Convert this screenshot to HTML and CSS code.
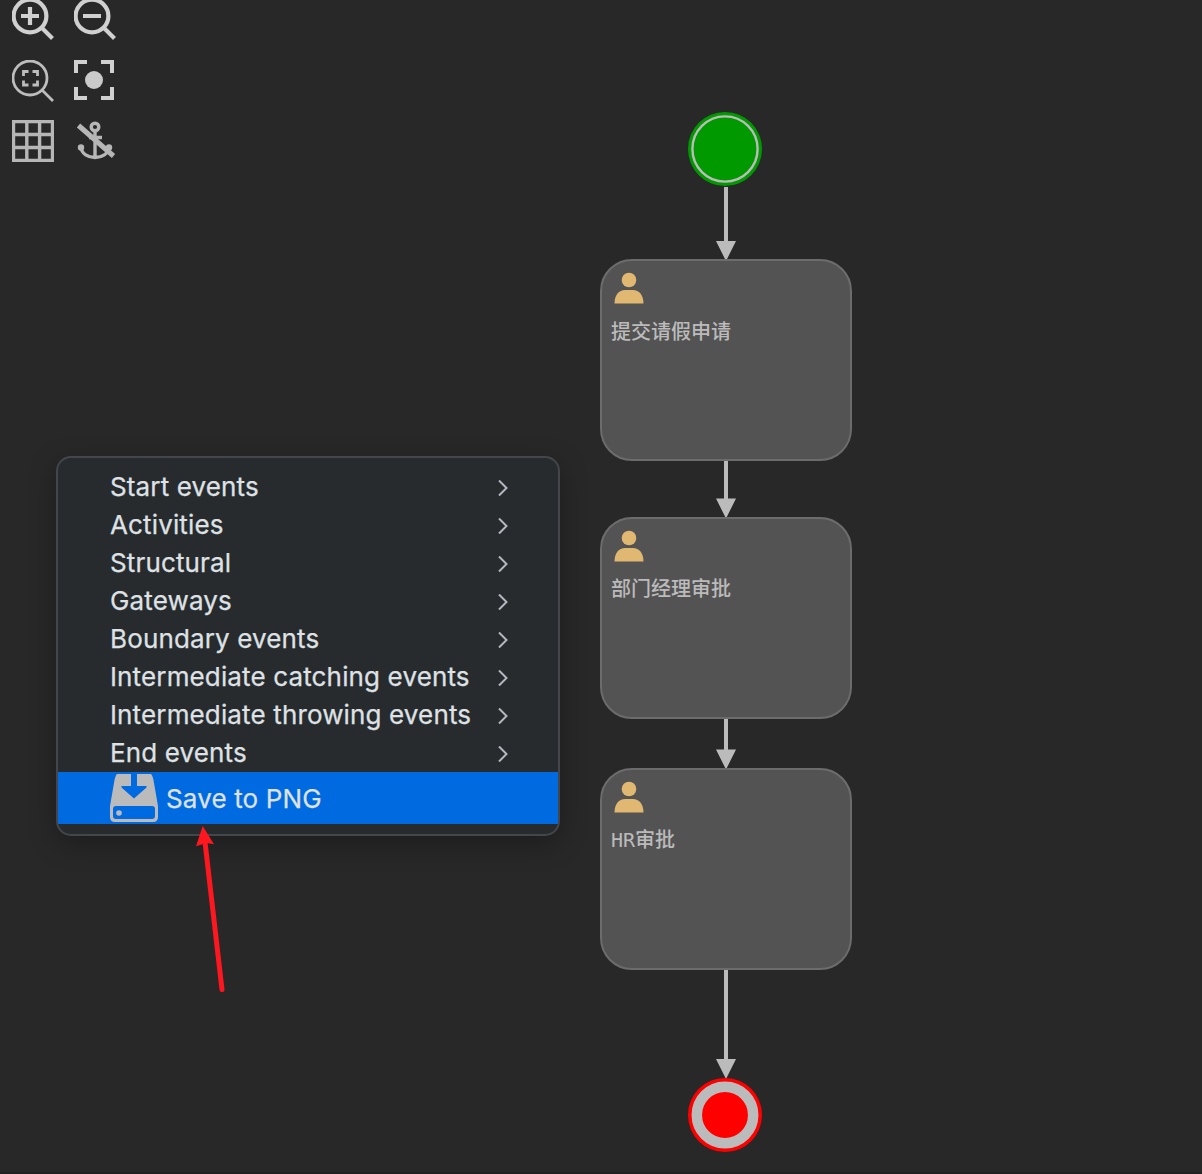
FILE: index.html
```html
<!DOCTYPE html>
<html lang="zh">
<head>
<meta charset="utf-8">
<title>BPMN diagram</title>
<link rel="stylesheet" href="styles.css">
</head>
<body>
<main class="canvas">
  <div class="toolbar">
    <svg class="tool short" viewBox="12 0 42 40"><circle cx="30" cy="16" r="16.400"/><path d="M21 16h18M30 7v18M42 28l10.500 10.500"/></svg>
    <svg class="tool short" viewBox="74 0 42 40"><circle cx="92" cy="16" r="16.400"/><path d="M83 16h18M104 28l10.500 10.500"/></svg>
    <svg class="tool thin" viewBox="12 60 42 42"><circle cx="30" cy="78" r="17"/><path d="M42.500 90.500l10.500 10.500M23.500 76v-4.500h5M32.500 71.500h5V76M23.500 80.500V85h5M32.500 85h5v-4.500"/></svg>
    <svg class="tool focus" viewBox="74 60 42 42"><path d="M76 73V62h11M101 62h11v11M76 87v11h11M101 98h11V87"/><circle class="solid" cx="94" cy="80" r="9"/></svg>
    <svg class="tool grid" viewBox="12 120 42 42"><path d="M13.500 121.500h39v39h-39zM26.800 121.500v39M39.600 121.500v39M13.500 134.500h39M13.500 147.500h39"/></svg>
    <svg class="tool grid" viewBox="74 120 42 42"><circle cx="95" cy="127" r="3.800"/><path d="M95 131v26M89 137.500h13M81 147c1 14 27 14 28 0"/><path class="slash" d="M78.500 125.500l35 30.500"/><circle class="solid" cx="81" cy="147.500" r="3.200"/><circle class="solid" cx="109" cy="147.500" r="3.200"/></svg>
  </div>

  <svg class="flows" viewBox="0 0 1202 1174">
    <path class="line" d="M726 187v56M726 461v40M726 718v33M726 969v93"/>
    <path class="head" d="M716 241h20l-10 20zM716 498.500h20l-10 20zM716 749.500h20l-10 20zM716 1059h20l-10 20z"/>
  </svg>

  <svg class="event start" viewBox="0 0 74 74"><circle cx="37" cy="37" r="37"/><circle class="ring" cx="37" cy="37" r="32.600"/></svg>
  <section class="task submit"><svg class="user" viewBox="0 0 30 32"><circle cx="15" cy="8" r="7.300"/><path d="M.5 31.500C.5 23 5 18 11 18h8c6 0 10.500 5 10.500 13.500z"/></svg><span class="name">提交请假申请</span></section>
  <section class="task manager"><svg class="user" viewBox="0 0 30 32"><circle cx="15" cy="8" r="7.300"/><path d="M.5 31.500C.5 23 5 18 11 18h8c6 0 10.500 5 10.500 13.500z"/></svg><span class="name">部门经理审批</span></section>
  <section class="task hr"><svg class="user" viewBox="0 0 30 32"><circle cx="15" cy="8" r="7.300"/><path d="M.5 31.500C.5 23 5 18 11 18h8c6 0 10.500 5 10.500 13.500z"/></svg><span class="name">HR审批</span></section>
  <svg class="event end" viewBox="0 0 74 74"><circle cx="37" cy="37" r="37"/><circle class="ring" cx="37" cy="37" r="28.200"/></svg>

  <nav class="menu">
    <div class="item"><span>Start events</span><svg class="chevron" viewBox="0 0 10 16"><path d="M1 .5l7.500 7.500L1 15.500"/></svg></div>
    <div class="item"><span>Activities</span><svg class="chevron" viewBox="0 0 10 16"><path d="M1 .5l7.500 7.500L1 15.500"/></svg></div>
    <div class="item"><span>Structural</span><svg class="chevron" viewBox="0 0 10 16"><path d="M1 .5l7.500 7.500L1 15.500"/></svg></div>
    <div class="item"><span>Gateways</span><svg class="chevron" viewBox="0 0 10 16"><path d="M1 .5l7.500 7.500L1 15.500"/></svg></div>
    <div class="item"><span>Boundary events</span><svg class="chevron" viewBox="0 0 10 16"><path d="M1 .5l7.500 7.500L1 15.500"/></svg></div>
    <div class="item"><span>Intermediate catching events</span><svg class="chevron" viewBox="0 0 10 16"><path d="M1 .5l7.500 7.500L1 15.500"/></svg></div>
    <div class="item"><span>Intermediate throwing events</span><svg class="chevron" viewBox="0 0 10 16"><path d="M1 .5l7.500 7.500L1 15.500"/></svg></div>
    <div class="item"><span>End events</span><svg class="chevron" viewBox="0 0 10 16"><path d="M1 .5l7.500 7.500L1 15.500"/></svg></div>
    <div class="item save"><svg class="disk" viewBox="0 0 48 48"><path fill-rule="evenodd" d="M7 0H21V12H11.500V13.500L24 24.500L36.500 13.500V12H27V0H41Q43 2 44 9L48 32V43Q48 48 43 48H5Q0 48 0 43V32L4 9Q5 2 7 0zM6 32Q3 32 3 35V42Q3 45 6 45H42Q45 45 45 42V35Q45 32 42 32z"/><circle cx="9" cy="39" r="2.800"/></svg><span>Save to PNG</span></div>
  </nav>

  <svg class="pointer" viewBox="0 0 30 168"><path class="shaft" d="M9 16L26 163.500"/><path class="tip" d="M6.700 0L18 18.300L10.500 17L0 20.300z"/></svg>
</main>
</body>
</html>
```
FILE: styles.css
```css
body { margin: 0; background: #282828; }
.canvas {
  position: relative;
  box-sizing: border-box;
  width: 1202px;
  height: 1174px;
  overflow: hidden;
  background: #282828;
  border-bottom: 2px solid #232323;
}
svg { display: block; }

.toolbar {
  display: grid;
  grid-template-columns: 42px 42px;
  column-gap: 20px;
  padding-left: 12px;
}
.tool {
  width: 42px;
  height: 42px;
  margin-bottom: 18px;
  fill: none;
  stroke: #d0d0d0;
  stroke-width: 4.2;
}
.tool.short { height: 40px; margin-bottom: 20px; }
.tool.thin { stroke: #bdbdbd; stroke-width: 2.8; }
.tool.focus { stroke-width: 4; }
.tool.grid { stroke: #b6b6b6; stroke-width: 3.4; }
.tool .solid { fill: #cacaca; stroke: none; }
.tool.grid .solid { fill: #b6b6b6; }
.tool .slash { stroke-width: 5; }

.flows { position: absolute; left: 0; top: 0; width: 1202px; height: 1174px; }
.line { stroke: #bbb; stroke-width: 4; }
.head { fill: #bbb; }

.event { position: absolute; left: 688px; width: 74px; height: 74px; }
.ring { stroke: #bbb; }
.start { top: 112px; fill: #090; }
.start .ring { stroke-width: 2.4; }
.end { top: 1078px; fill: #f00; }
.end .ring { stroke-width: 10.5; }

.task {
  position: absolute;
  left: 600px;
  box-sizing: border-box;
  width: 252px;
  height: 202px;
  border: 2px solid #6c6c6c;
  border-radius: 32px;
  background: #535353;
  padding: 11px 9px;
}
.submit { top: 259px; }
.manager { top: 517px; }
.hr { top: 768px; }
.user { width: 30px; height: 32px; margin-left: 3px; fill: #e0b872; }
.name {
  display: block;
  margin-top: 12px;
  font: 500 20px/30px "DejaVu Sans Mono", "Noto Sans CJK SC", monospace;
  color: #bbb;
}
.submit .name { margin-top: 13px; }

.menu {
  position: absolute;
  left: 56px;
  top: 456px;
  box-sizing: border-box;
  width: 504px;
  height: 380px;
  padding-top: 10px;
  border: 2px solid #43474b;
  border-radius: 15px;
  background: #272b2e;
  box-shadow: 0 8px 28px rgba(0, 0, 0, .28);
  font: 26px/38px Inter, sans-serif;
  letter-spacing: .14px;
  color: #dfe1e5;
  -webkit-text-stroke: .25px #dfe1e5;
}
.item {
  display: flex;
  align-items: center;
  justify-content: space-between;
  height: 38px;
  padding: 0 50px 0 52px;
}
.chevron { width: 10px; height: 16px; margin-top: 2px; fill: none; stroke: #b5b8c0; stroke-width: 2; }
.save { height: 52px; justify-content: flex-start; gap: 8px; background: #006ae0; }
.save span { padding-top: 2px; }
.disk { width: 48px; height: 48px; fill: #bbb; }

.pointer { position: absolute; left: 196px; top: 826px; width: 30px; height: 168px; }
.shaft { stroke: #ff1720; stroke-width: 5; stroke-linecap: round; }
.tip { fill: #ff1720; }
```
